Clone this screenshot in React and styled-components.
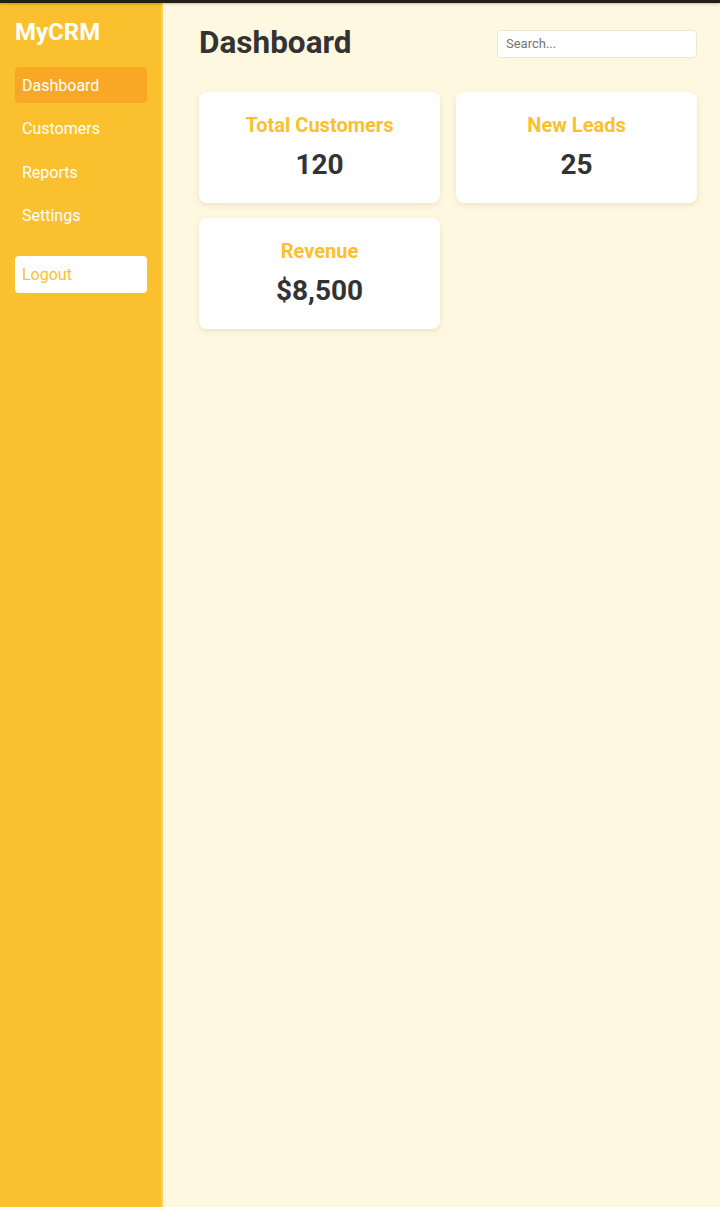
import React from "react";
import styled, { createGlobalStyle } from "styled-components";

const Global = createGlobalStyle`
  html, body { margin: 0; padding: 0; height: 100%; }
  body { font-family: Roboto, "Noto Sans", sans-serif; background: #fff8e1; }
  #root { height: 100%; }
  * { box-sizing: border-box; }
`;

const Page = styled.div`
  display: flex;
  flex-direction: column;
  height: 1207px;
`;

const TopBar = styled.div`
  height: 3px;
  flex: 0 0 3px;
  background: #231e16;
  box-shadow: 0 1px 3px rgba(0,0,0,0.25);
  position: relative;
  z-index: 1;
`;

const Layout = styled.div`
  display: flex;
  flex: 1;
`;

const Sidebar = styled.aside`
  width: 163px;
  flex: 0 0 163px;
  background: #fbc02d;
  border-right: 2px solid #fdd160;
  padding: 14px 14px 14px 15px;
  display: flex;
  flex-direction: column;
`;

const Brand = styled.div`
  color: #fff;
  font-size: 24px;
  font-weight: 700;
  line-height: 30px;
  margin: 0 0 20px 0;
`;

const Nav = styled.nav`
  display: flex;
  flex-direction: column;
  gap: 7.5px;
`;

const NavItem = styled.div`
  height: 36px;
  display: flex;
  align-items: center;
  padding: 0 7px;
  border-radius: 4px;
  color: #fff;
  font-size: 16px;
  background: ${p => (p.$active ? "#f9a825" : "transparent")};
`;

const LogoutButton = styled.button`
  margin-top: 22px;
  height: 37px;
  background: #fff;
  border: none;
  border-radius: 4px;
  color: #fbc02d;
  font-family: Roboto, sans-serif;
  font-size: 16px;
  text-align: left;
  padding: 0 7px;
`;

const Main = styled.main`
  flex: 1;
  padding: 18px 23px 0 36px;
  display: flex;
  flex-direction: column;
`;

const Header = styled.header`
  display: flex;
  align-items: center;
  justify-content: space-between;
  margin-bottom: 27px;
`;

const Title = styled.h1`
  margin: 0;
  font-size: 31.5px;
  font-weight: 700;
  color: #333;
  line-height: 44px;
`;

const Search = styled.input`
  width: 200px;
  height: 28px;
  border: 1px solid #ece6d2;
  border-radius: 4px;
  padding: 0 8px;
  font-family: Roboto, sans-serif;
  font-size: 13px;
  color: #333;
  outline: none;
  margin-top: 1px;
  &::placeholder { color: #757575; }
`;

const Grid = styled.div`
  display: grid;
  grid-template-columns: 1fr 1fr;
  column-gap: 16px;
  row-gap: 15px;
`;

const Card = styled.div`
  background: #fff;
  border-radius: 8px;
  height: 111px;
  box-shadow: 0 2px 6px rgba(120, 100, 40, 0.15);
  display: flex;
  flex-direction: column;
  align-items: center;
  padding-top: 21px;
`;

const CardTitle = styled.div`
  color: #fbc02d;
  font-size: 20px;
  font-weight: 700;
  line-height: 24px;
`;

const CardValue = styled.div`
  color: #333;
  font-size: 28px;
  font-weight: 700;
  line-height: 34px;
  margin-top: 11px;
`;

const stats = [
  { title: "Total Customers", value: "120" },
  { title: "New Leads", value: "25" },
  { title: "Revenue", value: "$8,500" },
];

export default function App() {
  return (
    <Page>
      <Global />
      <TopBar />
      <Layout>
        <Sidebar>
          <Brand>MyCRM</Brand>
          <Nav>
            <NavItem $active>Dashboard</NavItem>
            <NavItem>Customers</NavItem>
            <NavItem>Reports</NavItem>
            <NavItem>Settings</NavItem>
          </Nav>
          <LogoutButton>Logout</LogoutButton>
        </Sidebar>
        <Main>
          <Header>
            <Title>Dashboard</Title>
            <Search placeholder="Search..." />
          </Header>
          <Grid>
            {stats.map(s => (
              <Card key={s.title}>
                <CardTitle>{s.title}</CardTitle>
                <CardValue>{s.value}</CardValue>
              </Card>
            ))}
          </Grid>
        </Main>
      </Layout>
    </Page>
  );
}
